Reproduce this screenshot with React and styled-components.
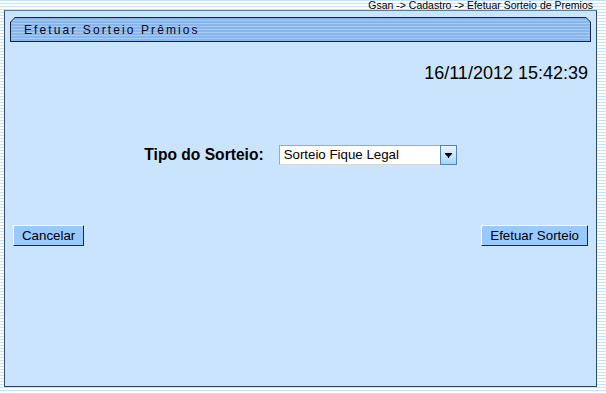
import React from 'react';
import styled, { createGlobalStyle } from 'styled-components';

const GlobalStyle = createGlobalStyle`
  html, body {
    margin: 0;
    padding: 0;
  }
  body {
    font-family: "Liberation Sans", Arial, sans-serif;
    background-color: #ffffff;
    background-image: repeating-linear-gradient(
      to bottom,
      #c4e2f8 0px,
      #c4e2f8 1px,
      #ffffff 1px,
      #ffffff 3px
    );
  }
`;

const Page = styled.div`
  width: 606px;
  height: 394px;
  overflow: hidden;
`;

const Breadcrumb = styled.div`
  height: 10px;
  padding-right: 13px;
  text-align: right;
  font-size: 10.5px;
  line-height: 10px;
  color: #000;
`;

const Panel = styled.div`
  margin-left: 4px;
  width: 591px;
  height: 375px;
  border: 1px solid #2c4660;
  border-top-color: #5a7a98;
  border-left-color: #34506c;
  background: #cbe4fd;
  display: flex;
  flex-direction: column;
`;

const TitleFrame = styled.div`
  margin: 6px 5px 0 5px;
  height: 25px;
  background: #16243a;
  padding: 1px;
  box-sizing: border-box;
  clip-path: polygon(5px 0, calc(100% - 5px) 0, 100% 5px, 100% 100%, 0 100%, 0 5px);
`;

const TitleBar = styled.div`
  height: 100%;
  padding-left: 13px;
  display: flex;
  align-items: center;
  font-size: 12px;
  letter-spacing: 2.1px;
  color: #0a0a1a;
  background: repeating-linear-gradient(
    to bottom,
    #88b6ec 0px,
    #88b6ec 2px,
    #a6cbf5 2px,
    #a6cbf5 3px
  );
  clip-path: polygon(4px 0, calc(100% - 4px) 0, 100% 4px, 100% 100%, 0 100%, 0 4px);
`;

const DateRow = styled.div`
  margin-top: 20px;
  padding-right: 8px;
  text-align: right;
  font-size: 18px;
  line-height: 22px;
  color: #000;
`;

const FieldRow = styled.div`
  margin-top: 61px;
  display: flex;
  justify-content: center;
  align-items: center;
  gap: 15px;
`;

const Label = styled.span`
  font-size: 15.6px;
  font-weight: bold;
  color: #000;
`;

const Select = styled.div`
  width: 178px;
  height: 20px;
  box-sizing: border-box;
  display: flex;
  background: #fff;
  border: 1px solid #a8a8a8;
  border-bottom-color: #d8d8d8;
  border-right: none;
`;

const SelectText = styled.div`
  flex: 1;
  padding-left: 4px;
  font-size: 13.3px;
  line-height: 18px;
  color: #000;
`;

const ArrowButton = styled.div`
  width: 17px;
  height: 20px;
  margin-top: -1px;
  box-sizing: border-box;
  border: 1px solid #4f86b8;
  background: linear-gradient(to bottom, #eaf5fd, #a6d5f6);
  display: flex;
  align-items: center;
  justify-content: center;
`;

const ButtonRow = styled.div`
  margin-top: 60px;
  padding: 0 8px 0 8px;
  display: flex;
  justify-content: space-between;
`;

const Button = styled.button`
  height: 21px;
  padding: 0 ${(p) => p.$pad}px;
  box-sizing: border-box;
  font-family: "Liberation Sans", Arial, sans-serif;
  font-size: 13.3px;
  color: #000;
  background: #99c9ff;
  border: 1px solid;
  border-color: #ffffff #1c2c48 #1c2c48 #ffffff;
  cursor: pointer;
`;

export default function App() {
  return (
    <Page>
      <GlobalStyle />
      <Breadcrumb>Gsan -&gt; Cadastro -&gt; Efetuar Sorteio de Premios</Breadcrumb>
      <Panel>
        <TitleFrame>
          <TitleBar>Efetuar Sorteio Prêmios</TitleBar>
        </TitleFrame>
        <DateRow>16/11/2012 15:42:39</DateRow>
        <FieldRow>
          <Label>Tipo do Sorteio:</Label>
          <Select>
            <SelectText>Sorteio Fique Legal</SelectText>
            <ArrowButton>
              <svg width="7" height="5" viewBox="0 0 7 5">
                <path d="M0 0h7v1L4 4v1H3V4L0 1z" fill="#000" />
              </svg>
            </ArrowButton>
          </Select>
        </FieldRow>
        <ButtonRow>
          <Button $pad={8}>Cancelar</Button>
          <Button $pad={8}>Efetuar Sorteio</Button>
        </ButtonRow>
      </Panel>
    </Page>
  );
}
